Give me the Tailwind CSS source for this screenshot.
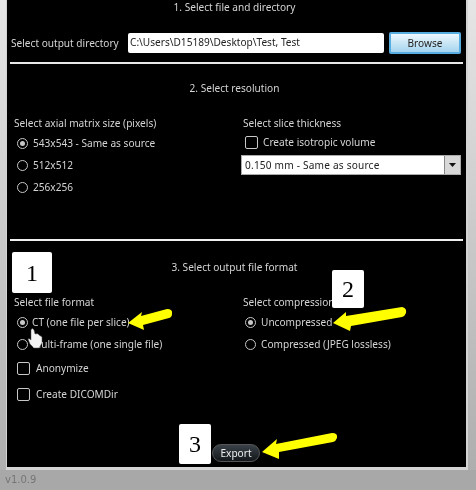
<!DOCTYPE html>
<html lang="en">
<head>
    <meta charset="UTF-8">
    <title>Export</title>
    <script src="https://cdn.jsdelivr.net/npm/@tailwindcss/browser@4"></script>
</head>
<body class="bg-[#a8a8a8] font-['Noto_Sans',sans-serif] text-[10.1px] leading-[14px] text-[#d4d4d4]">
    <div class="relative w-[476px] h-[490px] overflow-hidden blur-[0.35px]">
        <div class="bg-gradient-to-b from-[#e6e6e6] to-[#aeaeae] h-[470px]">
            <div class="ml-[6px] w-[462px] h-[470px] bg-black border-r-2 border-b-3 border-l border-[#d4d4d4] px-[3px]">

                <section class="h-[64px] border-b-2 border-[#e8e8e8]">
                    <p class="text-center h-[32px] pr-[4px]">1. Select file and directory</p>
                    <div class="flex items-center pl-[1px]">
                        <span class="w-[117px]">Select output directory</span>
                        <div class="w-[256px] h-[20px] bg-white rounded-[2px] text-[#222] pl-[2px] leading-[18px]">C:\Users\D15189\Desktop\Test, Test</div>
                        <button class="ml-[5px] w-[72px] h-[22px] border-2 border-[#58ade0] rounded-[2px] bg-gradient-to-b from-[#eef8fd] to-[#a4d4ee] text-[#222]">Browse</button>
                    </div>
                </section>

                <section class="h-[177px] border-b-2 border-[#f0f0f0]">
                    <p class="pt-[17px] text-center pr-[4px]">2. Select resolution</p>
                    <div class="grid grid-cols-[229px_1fr] mt-[21px]">
                        <div class="pl-[4px]">
                            <p>Select axial matrix size (pixels)</p>
                            <div class="flex flex-col gap-[10px] mt-[7px] pl-[3px]">
                                <label class="flex items-center gap-[5px] h-[12px]"><span class="w-[11px] h-[11px] rounded-full border border-[#c8c8c8] flex items-center justify-center"><span class="w-[5px] h-[5px] rounded-full bg-[#c8c8c8]"></span></span>543x543 - Same as source</label>
                                <label class="flex items-center gap-[5px] h-[12px]"><span class="w-[11px] h-[11px] rounded-full border border-[#c8c8c8]"></span>512x512</label>
                                <label class="flex items-center gap-[5px] h-[12px]"><span class="w-[11px] h-[11px] rounded-full border border-[#c8c8c8]"></span>256x256</label>
                            </div>
                        </div>
                        <div>
                            <p class="pl-[4px]">Select slice thickness</p>
                            <label class="flex items-center gap-[5px] mt-[5px] pl-[6px] h-[14px]"><span class="w-[13px] h-[13px] rounded-[2px] border border-[#c8c8c8]"></span>Create isotropic volume</label>
                            <div class="flex items-center justify-between w-[220px] h-[20px] mt-[6px] ml-[2px] bg-white border border-[#aaa] text-[#222] pl-[3px]">
                                <span class="tracking-[0.2px]">0.150 mm - Same as source</span>
                                <span class="flex items-center justify-center w-[16px] h-[18px] bg-[#d8d8d8] border-l border-[#888]">
                                    <svg width="7" height="4" viewBox="0 0 7 4"><path d="M0 0h7L3.500 4z" fill="#111"/></svg>
                                </span>
                            </div>
                        </div>
                    </div>
                </section>

                <section class="h-[226px] relative">
                    <p class="pt-[19px] text-center pr-[4px]">3. Select output file format</p>
                    <div class="grid grid-cols-[229px_1fr] mt-[21px]">
                        <div class="pl-[4px]">
                            <p>Select file format</p>
                            <div class="flex flex-col mt-[7px] pl-[3px]">
                                <label class="flex items-center gap-[4px] h-[12px]"><span class="w-[11px] h-[11px] rounded-full border border-[#c8c8c8] flex items-center justify-center"><span class="w-[5px] h-[5px] rounded-full bg-[#c8c8c8]"></span></span>CT (one file per slice)</label>
                                <label class="flex items-center gap-[4px] h-[12px] mt-[10px]"><span class="w-[11px] h-[11px] rounded-full border border-[#c8c8c8]"></span>Multi-frame (one single file)</label>
                                <label class="flex items-center gap-[6px] h-[14px] mt-[11px]"><span class="w-[13px] h-[13px] rounded-[2px] border border-[#c8c8c8]"></span>Anonymize</label>
                                <label class="flex items-center gap-[6px] h-[14px] mt-[12px]"><span class="w-[13px] h-[13px] rounded-[2px] border border-[#c8c8c8]"></span>Create DICOMDir</label>
                            </div>
                        </div>
                        <div>
                            <p class="pl-[4px]">Select compression</p>
                            <div class="flex flex-col gap-[10px] mt-[7px] pl-[6px]">
                                <label class="flex items-center gap-[5px] h-[12px]"><span class="w-[11px] h-[11px] rounded-full border border-[#c8c8c8] flex items-center justify-center"><span class="w-[5px] h-[5px] rounded-full bg-[#c8c8c8]"></span></span>Uncompressed</label>
                                <label class="flex items-center gap-[5px] h-[12px]"><span class="w-[11px] h-[11px] rounded-full border border-[#c8c8c8]"></span>Compressed (JPEG lossless)</label>
                            </div>
                        </div>
                    </div>
                    <button class="absolute left-[202px] top-[203px] w-[48px] h-[18px] rounded-full border border-[#555] bg-gradient-to-b from-[#3a4148] to-[#14181c] text-[#eee]">Export</button>
                </section>
            </div>
        </div>
        <p class="h-[20px] bg-[#a8a8a8] pl-[5px] pt-[3px] text-[#757575] font-['DejaVu_Sans',sans-serif] text-[10px]">v1.0.9</p>

        <!-- annotations on top of the screenshot -->
        <div class="absolute left-[12px] top-[252px] w-[40px] h-[41px] bg-white rounded-[2px] flex items-center justify-center font-['Liberation_Serif',serif] text-[24px] text-black">1</div>
        <div class="absolute left-[332px] top-[270px] w-[32px] h-[38px] bg-white rounded-[2px] flex items-center justify-center font-['Liberation_Serif',serif] text-[24px] text-black">2</div>
        <div class="absolute left-[179px] top-[424px] w-[32px] h-[40px] bg-white rounded-[2px] flex items-center justify-center font-['Liberation_Serif',serif] text-[24px] text-black">3</div>

        <svg class="absolute left-0 top-0" width="476" height="490" viewBox="0 0 476 490" fill="none">
            <path d="M128 323 L142 312 L141 316 L167 309 Q173 309 172 314 Q172 317 169 318 L143 325 L144 330 Z" fill="#ffff00"/>
            <path d="M333 323 L346 312 L346 316 L402 307 Q407 308 406 313 Q405 316 402 317 L351 326 L350 331 Z" fill="#ffff00"/>
            <path d="M262 452 L277 439 L276 444 L332 433 Q338 433 337 438 Q336 441 333 442 L279 452 L279 459 Z" fill="#ffff00"/>
            <path d="M31 340 L31 330 Q32 327 34 330 L35 334 Q38 333 39 335 L42 337 L42 343 L39 348 L34 348 L30 344 L28 339 Q29 338 31 340 Z" fill="#f4f4f4" stroke="#555" stroke-width="0.5"/>
        </svg>
    </div>
</body>
</html>
